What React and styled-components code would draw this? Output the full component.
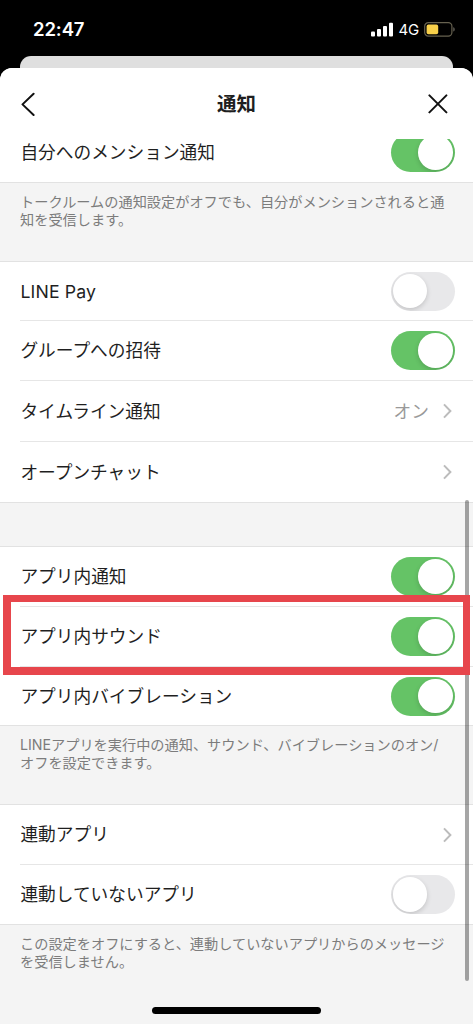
import React from "react";
import styled, { createGlobalStyle } from "styled-components";

const GlobalStyle = createGlobalStyle`
  * { box-sizing: border-box; }
  body {
    margin: 0;
    background: #000;
    font-family: Inter, "Noto Sans CJK JP", sans-serif;
    color: #1f1f1f;
  }
`;

const Screen = styled.div`
  position: relative;
  display: flex;
  flex-direction: column;
  width: 473px;
  height: 1024px;
  overflow: hidden;
  background: #000;
`;

const StatusBar = styled.div`
  display: flex;
  justify-content: space-between;
  height: 56px;
  padding: 18px 17px 0 33px;
  color: #fff;
`;

const Clock = styled.div`
  font-size: 18.5px;
  line-height: 23px;
  font-weight: 600;
  letter-spacing: -0.1px;
`;

const StatusIcons = styled.div`
  display: flex;
  align-items: center;
  height: 23px;
`;

const Network = styled.span`
  margin: 1px 5px 0 6px;
  font-size: 15px;
  line-height: 20px;
  font-weight: 400;
  letter-spacing: -0.2px;
`;

const BackCard = styled.div`
  flex: none;
  height: 12px;
  margin: 0 20px;
  background: #dfdfdf;
  border-radius: 11px 11px 0 0;
`;

const Sheet = styled.div`
  flex: 1;
  display: flex;
  flex-direction: column;
  min-height: 0;
  background: #f4f4f4;
  border-radius: 12px 12px 0 0;
  overflow: hidden;
`;

const Header = styled.header`
  flex: none;
  display: flex;
  align-items: center;
  justify-content: space-between;
  height: 71px;
  padding: 0 24px 0 20px;
  background: #fff;
`;

const Title = styled.h1`
  margin: 0;
  padding-left: 10px;
  font-size: 19.5px;
  line-height: 28px;
  font-weight: 700;
`;

const List = styled.main`
  flex: 1;
  display: flex;
  flex-direction: column;
  min-height: 0;
  overflow: hidden;
`;

const Group = styled.section`
  flex: none;
  background: #fff;
  border-top: 1px solid #e2e2e2;
  border-bottom: 1px solid #e2e2e2;
  margin-top: ${(p) => p.$offset || 0}px;
`;

const RowBox = styled.div`
  display: flex;
  align-items: center;
  justify-content: space-between;
  height: ${(p) => p.$height || 60}px;
  margin-left: 20px;
  padding-right: 18px;
  font-size: 17.7px;
  line-height: 26px;

  & + & { border-top: 1px solid #e6e6e6; }
`;

const Label = styled.span`
  padding: 1px 0 0 0.4px;
  letter-spacing: ${(p) => p.$spacing || 0}px;
`;

const Value = styled.span`
  display: flex;
  align-items: center;
  gap: 14px;
  padding-right: 2px;
  color: #999;
`;

const ValueText = styled.span`
  padding-top: 1px;
`;

const Note = styled.p`
  flex: none;
  height: ${(p) => p.$height}px;
  margin: 0;
  padding: 10px 20px 0;
  font-size: 14.2px;
  line-height: 17.7px;
  white-space: nowrap;
  color: #7c7c7c;
`;

const Track = styled.span`
  flex: none;
  display: flex;
  justify-content: ${(p) => (p.$on ? "flex-end" : "flex-start")};
  width: 64.5px;
  height: 39px;
  padding: 2.2px;
  border-radius: 20px;
  background: ${(p) => (p.$on ? "#65c366" : "#e8e8ea")};
  overflow: hidden;
`;

const Knob = styled.span`
  width: 34.6px;
  height: 34.6px;
  border-radius: 50%;
  background: #fff;
  box-shadow: 0 2px 5px rgba(0, 0, 0, 0.16);
`;

const Highlight = styled.div`
  position: absolute;
  left: 3px;
  top: 595px;
  width: 467px;
  height: 80px;
  border: solid #e7464c;
  border-width: 7px 7px 8px 8px;
`;

const Scrollbar = styled.div`
  position: absolute;
  left: 465.3px;
  top: 500px;
  width: 4px;
  height: 481px;
  border-radius: 2px;
  background: rgba(0, 0, 0, 0.35);
`;

const HomeIndicator = styled.div`
  position: absolute;
  left: 152px;
  top: 1007px;
  width: 169px;
  height: 7px;
  border-radius: 4px;
  background: #000;
`;

const Toggle = ({ on }) => (
  <Track $on={on} role="switch" aria-checked={!!on}>
    <Knob />
  </Track>
);

const Chevron = () => (
  <svg width="10" height="16" viewBox="0 0 10 16" fill="none" stroke="#bcbcbc" strokeWidth="2">
    <path d="M1 1.4 7.4 8 1 14.6" />
  </svg>
);

const Row = ({ label, height, spacing, children }) => (
  <RowBox $height={height}>
    <Label $spacing={spacing}>{label}</Label>
    {children}
  </RowBox>
);

const LinkValue = ({ text }) => (
  <Value>
    {text && <ValueText>{text}</ValueText>}
    <Chevron />
  </Value>
);

const SignalIcon = () => (
  <svg width="22" height="15" viewBox="0 0 22 15" fill="#fff">
    <rect x="0" y="9.5" width="4" height="5" rx="1" />
    <rect x="6" y="7" width="4" height="7.5" rx="1" />
    <rect x="12" y="4" width="4" height="10.5" rx="1" />
    <rect x="18" y="0.8" width="4" height="13.7" rx="1" />
  </svg>
);

const BatteryIcon = () => (
  <svg width="32" height="15" viewBox="0 0 32 15" fill="none">
    <rect x="0.7" y="0.7" width="27.2" height="13.4" rx="3.6" stroke="#66614f" strokeWidth="1.2" />
    <rect x="2.6" y="2.6" width="11.6" height="9.6" rx="1.8" fill="#f8d04a" />
    <path d="M29.4 5.2c1.6.6 1.6 3.8 0 4.4z" fill="#77746a" />
  </svg>
);

const BackIcon = () => (
  <svg width="16" height="24" viewBox="0 0 16 24" fill="none" stroke="#111" strokeWidth="2" strokeLinecap="round">
    <path d="M13.6 1.8 2.5 12.4 13.6 23" strokeLinejoin="round" />
  </svg>
);

const CloseIcon = () => (
  <svg width="22" height="20" viewBox="0 0 22 20" fill="none" stroke="#111" strokeWidth="2" strokeLinecap="round">
    <path d="M2.4 1.4 19.4 18.4M19.4 1.4 2.4 18.4" />
  </svg>
);

export default function App() {
  return (
    <Screen lang="ja">
      <GlobalStyle />
      <StatusBar>
        <Clock>22:47</Clock>
        <StatusIcons>
          <SignalIcon />
          <Network>4G</Network>
          <BatteryIcon />
        </StatusIcons>
      </StatusBar>
      <BackCard />
      <Sheet>
        <Header>
          <BackIcon />
          <Title>通知</Title>
          <CloseIcon />
        </Header>
        <List>
          <Group $offset={-17}>
            <Row height={59} label="自分へのメンション通知"><Toggle on /></Row>
          </Group>
          <Note $height={78}>
            トークルームの通知設定がオフでも、自分がメンションされると通<br />
            知を受信します。
          </Note>
          <Group>
            <Row height={58} spacing={0.15} label="LINE Pay"><Toggle /></Row>
            <Row label="グループへの招待"><Toggle on /></Row>
            <Row height={61} label="タイムライン通知"><LinkValue text="オン" /></Row>
            <Row height={61} label="オープンチャット"><LinkValue /></Row>
          </Group>
          <Note $height={43} />
          <Group>
            <Row height={59} label="アプリ内通知"><Toggle on /></Row>
            <Row label="アプリ内サウンド"><Toggle on /></Row>
            <Row height={59} label="アプリ内バイブレーション"><Toggle on /></Row>
          </Group>
          <Note $height={78}>
            LINEアプリを実行中の通知、サウンド、バイブレーションのオン/<br />
            オフを設定できます。
          </Note>
          <Group>
            <Row height={59} label="連動アプリ"><LinkValue /></Row>
            <Row label="連動していないアプリ"><Toggle /></Row>
          </Group>
          <Note $height={99}>
            この設定をオフにすると、連動していないアプリからのメッセージ<br />
            を受信しません。
          </Note>
        </List>
      </Sheet>
      <Scrollbar />
      <Highlight />
      <HomeIndicator />
    </Screen>
  );
}
